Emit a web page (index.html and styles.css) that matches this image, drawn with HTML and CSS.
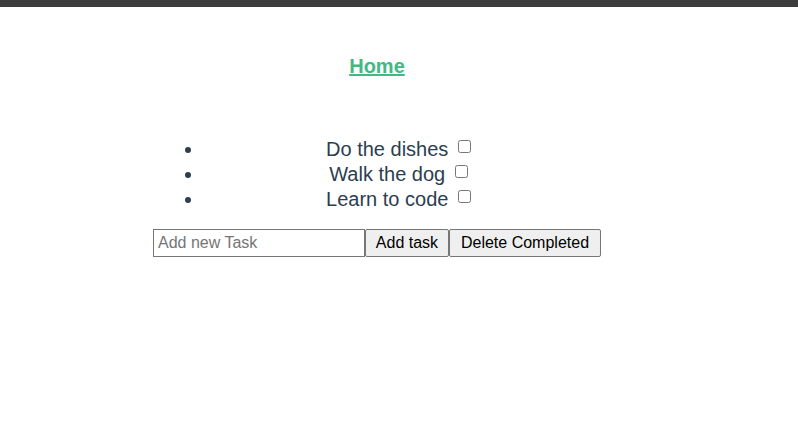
FILE: index.html
```html
<!DOCTYPE html>
<html>
<head>
<meta charset="utf-8">
<link rel="stylesheet" href="styles.css">
</head>
<body>
<div class="topbar"></div>
<div class="app">
  <nav class="nav"><a href="#" class="nav-link">Home</a></nav>
  <ul class="tasks">
    <li class="task">Do the dishes <input type="checkbox" class="check"></li>
    <li class="task">Walk the dog <input type="checkbox" class="check"></li>
    <li class="task">Learn to code <input type="checkbox" class="check"></li>
  </ul>
  <div class="form"><input type="text" class="new-task" placeholder="Add new Task"><button class="btn btn-add">Add task</button><button class="btn btn-del">Delete Completed</button></div>
</div>
</body>
</html>
```
FILE: styles.css
```css
html, body {
  margin: 0;
  padding: 0;
  background: #fff;
}
.topbar {
  height: 7px;
  background: #3c3c3c;
}
.app {
  width: 448px;
  margin-left: 153px;
  font-family: "Liberation Sans", Arial, sans-serif;
  color: #2c3e50;
  text-align: center;
}
.nav {
  padding-top: 48px;
  height: 23px;
}
.nav-link {
  font-size: 20px;
  line-height: 23px;
  font-weight: bold;
  color: #42b983;
  text-decoration: underline;
}
.tasks {
  margin: 59px 0 17px 0;
  padding-left: 51px;
  font-size: 20px;
  line-height: 25px;
  width: 392px;
}
.task {
  height: 25px;
}
.check {
  width: 13px;
  height: 13px;
  margin: 0 3px 0 4px;
  vertical-align: 3px;
}
.form {
  display: flex;
  text-align: left;
}
.new-task {
  box-sizing: border-box;
  width: 212px;
  height: 28px;
  margin: 0;
  padding: 1px 4px;
  font-family: "Liberation Sans", Arial, sans-serif;
  font-size: 16px;
  border: 1px solid #767676;
  border-radius: 0;
  color: #000;
}
.new-task::placeholder {
  color: #757575;
}
.btn {
  box-sizing: border-box;
  height: 28px;
  margin: 0;
  padding: 0;
  font-family: "Liberation Sans", Arial, sans-serif;
  font-size: 16px;
  color: #000;
  background: #efefef;
  border: 1px solid #767676;
  border-radius: 2px;
}
.btn-add {
  width: 84px;
}
.btn-del {
  width: 152px;
}
```
